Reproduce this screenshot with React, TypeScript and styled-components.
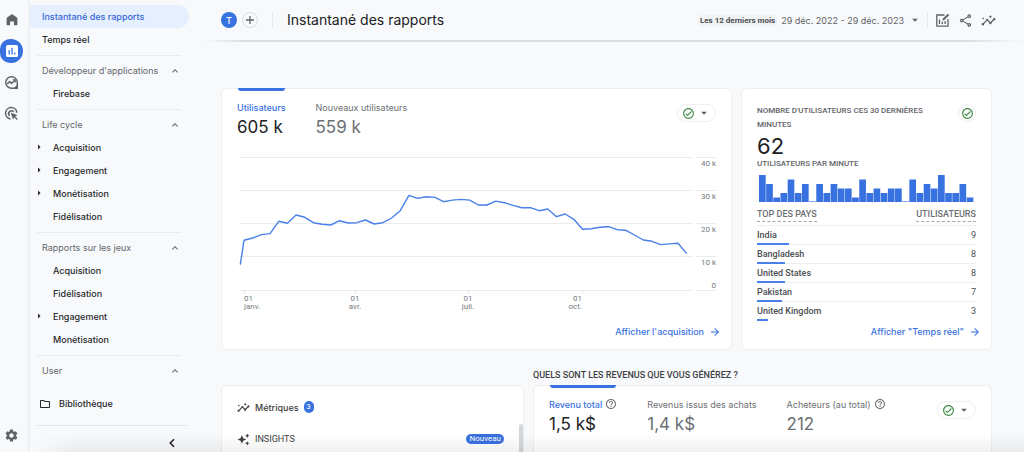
import React from "react";
import styled, { createGlobalStyle } from "styled-components";
import {
  MdArrowDropDown,
  MdArrowForward,
  MdArrowRight,
  MdAutoAwesome,
  MdExpandLess,
  MdHelpOutline,
  MdInsights,
  MdOutlineCheckCircle,
  MdOutlineFolder,
  MdOutlineShare,
  MdSettings,
} from "react-icons/md";

const brand = '"Inter", "Liberation Sans", sans-serif';
const plain = '"Roboto", "Liberation Sans", sans-serif';

const GlobalStyle = createGlobalStyle`
  *, *::before, *::after { box-sizing: border-box; }
  body {
    margin: 0;
    background: #f8f9fb;
    color: #3c4043;
    font-family: ${brand};
    font-size: 9px;
  }
  h1, h2, p, ul { margin: 0; padding: 0; }
  button { font: inherit; color: inherit; background: none; border: 0; padding: 0; cursor: pointer; }
  a { color: inherit; text-decoration: none; }
  svg { display: block; flex: none; }
`;

/* ---------- shell ---------- */

const Shell = styled.div`
  position: relative;
  display: flex;
  height: 100vh;
  overflow: hidden;
`;

const Rail = styled.nav`
  flex: none;
  width: 30px;
  border-right: 2px solid #eff1f3;
  display: flex;
  flex-direction: column;
  gap: 7px;
  padding: 8px 0 5px;
  color: #5f6368;
`;

const RailButton = styled.button<{ $active?: boolean; $last?: boolean }>`
  display: grid;
  place-items: center;
  width: 23px;
  height: 24px;
  border-radius: ${(p) => (p.$active ? "10px 12px 12px 10px" : "0")};
  margin-top: ${(p) => (p.$last ? "auto" : "0")};
  background: ${(p) => (p.$active ? "#3871e0" : "none")};
  color: ${(p) => (p.$active ? "#ffffff" : "inherit")};
`;

const Sidebar = styled.nav`
  flex: none;
  width: 175px;
  padding-top: 5px;
`;

const NavLink = styled.a<{ $active?: boolean; $child?: boolean }>`
  position: relative;
  display: flex;
  align-items: center;
  height: 23px;
  width: 159px;
  padding-left: ${(p) => (p.$child ? "23px" : "12px")};
  border-radius: 0 12px 12px 0;
  background: ${(p) => (p.$active ? "#e6effd" : "none")};
  color: ${(p) => (p.$active ? "#3367d6" : "#27292c")};
  font-weight: 500;
`;

const Caret = styled(MdArrowRight)`
  position: absolute;
  left: 3px;
  top: 5px;
`;

const Group = styled.section`
  width: 144px;
  margin-left: 7px;
  border-top: 1px solid #e9ebee;
  padding: 3px 0 4px;
  & ${NavLink} { margin-left: -7px; }
`;

const TopLinks = styled.div`
  padding-bottom: 4px;
`;

const GroupToggle = styled.button`
  display: flex;
  justify-content: space-between;
  align-items: center;
  width: 100%;
  height: 23px;
  padding-left: 5px;
  color: #63676b;
`;

const Library = styled.a`
  display: flex;
  align-items: center;
  gap: 8px;
  height: 23px;
  margin: 6px 0 10px;
  padding-left: 9px;
  font-weight: 500;
  color: #27292c;
`;

const Collapse = styled.div`
  width: 150px;
  margin-left: 7px;
  border-top: 1px solid #e1e3e6;
  padding: 12px 11px 0 0;
  display: flex;
  justify-content: flex-end;
  color: #202124;
`;

const Main = styled.main`
  flex: 1;
  min-width: 0;
`;

const FadeOut = styled.div`
  position: absolute;
  left: 36px;
  right: 0;
  bottom: 0;
  height: 18px;
  pointer-events: none;
  background: linear-gradient(to bottom, rgba(60, 64, 67, 0), rgba(60, 64, 67, 0.08));
  mask-image: linear-gradient(to right, transparent, #000 40px);
`;

/* ---------- header ---------- */

const Header = styled.header`
  display: flex;
  align-items: center;
  height: 42px;
  padding: 0 28px 0 16px;
  border-bottom: 2px solid;
  border-image: linear-gradient(to right, #f8f9fb, #dadcdf 40px, #dadcdf calc(100% - 60px), #f8f9fb) 1;
`;

const Avatar = styled.span`
  display: grid;
  place-items: center;
  width: 16px;
  height: 16px;
  border-radius: 50%;
  background: #3871e0;
  color: #fff;
  font-weight: 500;
`;

const AddButton = styled.button`
  display: grid;
  place-items: center;
  width: 16px;
  height: 16px;
  margin-left: 5px;
  border: 1px solid #dcdee1;
  border-radius: 50%;
  color: #5f6368;
`;

const Rule = styled.span`
  width: 1px;
  height: 16px;
  margin: 0 14px;
  background: #e6e8ea;
`;

const Title = styled.h1`
  font-size: 14px;
  line-height: 20px;
  font-weight: 400;
  color: #202124;
`;

const DateButton = styled.button`
  display: flex;
  align-items: center;
  margin-left: auto;
  color: #5f6368;
  font-size: 9px;
`;

const Period = styled.span`
  margin-right: 4px;
  padding: 0 2px;
  border-radius: 2px;
  background: #f1f2f4;
  color: #4a4e52;
  font-family: ${plain};
  font-size: 8px;
  line-height: 11px;
  font-weight: 700;
`;

const DateArrow = styled(MdArrowDropDown)`
  margin-left: 4px;
`;

const Tools = styled.div`
  display: flex;
  gap: 8px;
  color: #5f6368;
  & button { display: grid; }
`;

const ToolRule = styled(Rule)`
  margin: 0 7px 0 5px;
`;

/* ---------- cards ---------- */

const Content = styled.div`
  padding: 46px 32px 0 16px;
`;

const TopRow = styled.div`
  display: grid;
  grid-template-columns: minmax(0, 511fr) minmax(0, 251fr);
  gap: 9px;
`;

const BottomRow = styled.div`
  display: grid;
  grid-template-columns: minmax(0, 303fr) minmax(0, 459fr);
  gap: 9px;
  align-items: end;
  margin-top: 19px;
`;

const Card = styled.section`
  position: relative;
  border: 1px solid #eceef0;
  border-radius: 6px;
  background: #fff;
  padding: 13px 15px;
`;

const ShortCard = styled(Card)`
  height: 130px;
`;

const InsightCard = styled(ShortCard)`
  padding-top: 15px;
`;

const TrendCard = styled(Card)`
  min-height: 262px;
`;

const Metrics = styled.div`
  display: flex;
  align-items: flex-start;
`;

const Metric = styled.button<{ $active?: boolean }>`
  position: relative;
  text-align: left;
  margin-right: 30px;
  white-space: nowrap;
  color: #6b6f73;
  &::before {
    content: "";
    display: ${(p) => (p.$active ? "block" : "none")};
    position: absolute;
    top: -14px;
    left: 1px;
    right: 1px;
    height: 3px;
    border-radius: 0 0 3px 3px;
    background: #3871e0;
  }
`;

const MetricLabel = styled.span<{ $active?: boolean }>`
  display: flex;
  align-items: center;
  gap: 3px;
  height: 10px;
  color: ${(p) => (p.$active ? "#3871e0" : "#6b6f73")};
  font-weight: ${(p) => (p.$active ? 500 : 400)};
  & svg { color: #6b6f73; }
`;

const MetricValue = styled.span<{ $active?: boolean }>`
  display: block;
  margin-top: 4px;
  font-size: 17px;
  line-height: 22px;
  color: ${(p) => (p.$active ? "#202124" : "#6b6f73")};
`;

const Status = styled.button<{ $round?: boolean }>`
  display: flex;
  align-items: center;
  justify-content: center;
  gap: 2px;
  flex: none;
  width: ${(p) => (p.$round ? "18px" : "39px")};
  height: 18px;
  margin-top: 2px;
  margin-left: auto;
  border: 1px solid #eceef0;
  border-radius: 9px;
  color: #5f6368;
  & svg:first-child { color: #3d8a45; }
`;

const Chart = styled.svg`
  width: 100%;
  margin-top: 12px;
  overflow: visible;
  & text {
    font-family: ${plain};
    font-size: 8px;
    fill: #75797d;
  }
`;

const MoreLink = styled.a`
  position: absolute;
  right: 10px;
  bottom: 11px;
  display: flex;
  align-items: center;
  gap: 5px;
  color: #3871e0;
  font-weight: 500;
  line-height: 12px;
`;

const CardHead = styled.div`
  display: flex;
  align-items: flex-start;
  justify-content: space-between;
`;

const Overline = styled.h2`
  font-family: ${plain};
  font-size: 8px;
  line-height: 14px;
  font-weight: 500;
  color: #5f6368;
  text-transform: uppercase;
`;

const HeadText = styled(Overline)`
  padding-top: 2px;
`;

const BigNumber = styled.p`
  font-size: 22px;
  line-height: 26px;
  margin: 1px 0 -2px;
  color: #202124;
`;

const Bars = styled.svg`
  width: 100%;
  margin-top: 4px;
  padding: 0 2px;
`;

/* Share of the table's width that the country column takes. */
const countryColumn = 0.7;

const Countries = styled.table`
  width: 100%;
  margin-top: 6px;
  table-layout: fixed;
  border-collapse: collapse;
  font-family: ${plain};
  color: #4a4e52;
  & th { padding: 0; font-weight: 500; text-align: left; }
  & td { padding: 0; text-align: right; }
  & thead th { height: 17px; vertical-align: top; font-size: 9px; color: #6b6f73; }
  & thead th:first-child { width: ${countryColumn * 100}%; }
  & thead th:last-child { text-align: right; }
  & tbody tr { border-top: 1px solid #eceef0; height: 19px; }
`;

const Dashed = styled.span`
  display: inline-block;
  line-height: 13px;
  border-bottom: 1px dashed #a5a8ab;
`;

const Country = styled.div`
  position: relative;
  line-height: 18px;
`;

const Share = styled.div`
  position: absolute;
  left: 0;
  bottom: -1px;
  height: 2px;
  background: #4a80e8;
`;

const SectionTitle = styled(Overline)`
  color: #3c4043;
  font-size: 9px;
  line-height: 12px;
  margin-bottom: 4px;
`;

const InsightHead = styled.div`
  display: flex;
  align-items: center;
  gap: 5px;
  height: 12px;
  font-weight: 500;
  color: #3c4043;
`;

const InsightRow = styled(InsightHead)`
  margin: 20px 4px 0 0;
  font-family: ${plain};
  font-weight: 400;
`;

const Count = styled.span`
  min-width: 10px;
  padding: 0 2px;
  border-radius: 6px;
  background: #3871e0;
  color: #fff;
  font-family: ${plain};
  font-size: 8px;
  font-weight: 400;
  line-height: 12px;
  text-align: center;
`;

const NewTag = styled(Count)`
  margin-left: auto;
  padding: 0 3px;
  line-height: 10px;
`;

const Thumb = styled.div`
  position: absolute;
  right: 0;
  top: 38px;
  bottom: 0;
  width: 4px;
  border-radius: 2px 2px 0 0;
  background: #d5d7da;
`;

/* ---------- icons ---------- */

const HomeIcon = () => (
  <svg width="14" height="14" viewBox="0 0 14 14" fill="currentColor">
    <path d="M6.4 1.4q.6-.4 1.2 0l4.3 3.1q.5.4.5 1v6.1q0 .7-.7.7H8.9V8.4H5.1v3.9H2.3q-.7 0-.7-.7V5.500q0-.6.5-1z" />
  </svg>
);

const ReportsIcon = () => (
  <svg width="14" height="14" viewBox="0 0 14 14">
    <rect x="1" y="1" width="12" height="12" rx="1.5" fill="#fff" />
    <path d="M4.2 6v4.4M7 3.8v6.6M9.8 8.6v1.8" stroke="#3871e0" strokeWidth="1.3" />
  </svg>
);

const ExploreIcon = () => (
  <svg width="15" height="15" viewBox="0 0 15 15" fill="none" stroke="currentColor" strokeWidth="1.4">
    <path d="M13.3 13.3H7.5a5.8 5.8 0 1 1 5.8-5.8z" />
    <path d="m3.2 9 2.4-2.5 2 2 3.3-3.3" />
    <path d="M8.7 4.9h2.5v2.5" strokeWidth="1.2" />
    <path d="m10 13.3 3.3-3.3v3.3z" fill="currentColor" strokeWidth="0.6" />
  </svg>
);

const AdsIcon = () => (
  <svg width="15" height="15" viewBox="0 0 15 15" fill="none" stroke="currentColor" strokeWidth="1.5">
    <path d="M6.600 12.900A5.700 5.700 0 1 1 12.900 6.600" />
    <path d="M5.600 9.900A3 3 0 1 1 9.900 5.600" />
    <path d="m6.700 6.700 7 2.500-2.500 1.100 2.600 2.600-1 1-2.600-2.600-1.100 2.400z" fill="currentColor" stroke="none" />
  </svg>
);

const EditReportIcon = () => (
  <svg width="15" height="15" viewBox="0 0 15 15" fill="none" stroke="currentColor" strokeWidth="1.3">
    <path d="M9.500 2H1.800v11.200H13V6" />
    <path d="M4.500 6.500V11M7.300 8.800V11M10.100 8v3" />
    <path d="m7.800 7.200.4-1.600 4.700-4.500 1 1.100-4.600 4.600z" fill="currentColor" strokeWidth="0.6" />
  </svg>
);

const PlusIcon = () => (
  <svg width="10" height="10" viewBox="0 0 10 10" stroke="currentColor" strokeWidth="1.3">
    <path d="M5 1v8M1 5h8" />
  </svg>
);

const CollapseIcon = () => (
  <svg width="8" height="10" viewBox="0 0 8 10" fill="none" stroke="currentColor" strokeWidth="1.6">
    <path d="M6 1.300 2.300 5 6 8.700" />
  </svg>
);

/* ---------- data ---------- */

interface NavGroup {
  title: string;
  items: { label: string; expandable?: boolean }[];
}

const groups: NavGroup[] = [
  { title: "Développeur d'applications", items: [{ label: "Firebase" }] },
  {
    title: "Life cycle",
    items: [
      { label: "Acquisition", expandable: true },
      { label: "Engagement", expandable: true },
      { label: "Monétisation", expandable: true },
      { label: "Fidélisation" },
    ],
  },
  {
    title: "Rapports sur les jeux",
    items: [
      { label: "Acquisition" },
      { label: "Fidélisation" },
      { label: "Engagement", expandable: true },
      { label: "Monétisation" },
    ],
  },
  { title: "User", items: [] },
];

/* Weekly users over the year, in thousands; the first entry is a partial week. */
const weekly = [
  7.8, 15.1, 15.8, 16.8, 17.1, 20.8, 20.2, 22.7, 22, 20.4, 19.9, 19.7, 21, 20.3, 20.4, 21.2, 20, 20.4,
  21.8, 24, 28.6, 27.7, 28.2, 28, 26.7, 27.2, 27.4, 27.2, 25.7, 25.7, 26.9, 26.4, 25.6, 24.9, 24.9, 24,
  24.5, 22.2, 23, 21.4, 18.4, 18.6, 19, 19.2, 18.3, 18.1, 16.7, 15.2, 14.8, 13.8, 14, 14.2, 11.1,
];

const perMinute = [
  6, 4, 1, 2, 5, 2, 4, 0, 4, 2, 4, 3, 3, 1, 5, 2, 3, 2, 3, 3, 0, 5, 2, 4, 3, 6, 2, 2, 4, 1,
];

const countries = [
  { name: "India", users: 9 },
  { name: "Bangladesh", users: 8 },
  { name: "United States", users: 8 },
  { name: "Pakistan", users: 7 },
  { name: "United Kingdom", users: 3 },
];
const totalUsers = 62;

const yFor = (thousands: number) => 140.5 - thousands * 3.325;
const linePoints = weekly
  .map((v, i) => `${i === 0 ? 3.3 : 7 + (i - 1) * 8.68},${yFor(v).toFixed(1)}`)
  .join(" ");

const ticks = [
  { x: 7, month: "janv.", anchor: "start" as const },
  { x: 118, month: "avr.", anchor: "middle" as const },
  { x: 231, month: "juil.", anchor: "middle" as const },
  { x: 345, month: "oct.", anchor: "end" as const },
];

function TrendChart() {
  return (
    <Chart viewBox="0 0 479 164" role="img" aria-label="Utilisateurs">
      {[40, 30, 20, 10, 0].map((v) => (
        <g key={v}>
          <path
            d={`M3 ${Math.round(yFor(v)) - 0.5}H456M459 ${Math.round(yFor(v)) - 0.5}H479`}
            stroke="#eaecee"
          />
          <text x="479" y={v === 0 ? 138 : yFor(v) + 8} textAnchor="end">
            {v === 0 ? "0" : `${v} k`}
          </text>
        </g>
      ))}
      {ticks.map((t) => (
        <g key={t.month}>
          <path d={`M${t.x + 0.5} 140v4`} stroke="#e3e5e8" />
          <text x={t.x} y="151" textAnchor={t.anchor}>01</text>
          <text x={t.x} y="159" textAnchor={t.anchor}>{t.month}</text>
        </g>
      ))}
      <polyline points={linePoints} fill="none" stroke="#4a80e8" strokeWidth="1.4" strokeLinejoin="round" />
    </Chart>
  );
}

function StatusPill() {
  return (
    <Status aria-label="Qualité des données">
      <MdOutlineCheckCircle size={13} />
      <MdArrowDropDown size={14} />
    </Status>
  );
}

export default function App() {
  return (
    <>
      <GlobalStyle />
      <Shell>
        <Rail aria-label="Navigation principale">
          <RailButton aria-label="Accueil"><HomeIcon /></RailButton>
          <RailButton aria-label="Rapports" $active><ReportsIcon /></RailButton>
          <RailButton aria-label="Explorer"><ExploreIcon /></RailButton>
          <RailButton aria-label="Publicité"><AdsIcon /></RailButton>
          <RailButton aria-label="Administration" $last><MdSettings size={15} /></RailButton>
        </Rail>

        <Sidebar aria-label="Rapports">
          <TopLinks>
            <NavLink href="#instantane" $active>Instantané des rapports</NavLink>
            <NavLink href="#temps-reel">Temps réel</NavLink>
          </TopLinks>
          {groups.map((g) => (
            <Group key={g.title}>
              <GroupToggle aria-expanded>
                {g.title}
                <MdExpandLess size={12} />
              </GroupToggle>
              {g.items.map((item) => (
                <NavLink key={item.label} href="#rapport" $child>
                  {item.expandable && <Caret size={12} />}
                  {item.label}
                </NavLink>
              ))}
            </Group>
          ))}
          <Library href="#bibliotheque">
            <MdOutlineFolder size={12} />
            Bibliothèque
          </Library>
          <Collapse>
            <button aria-label="Réduire"><CollapseIcon /></button>
          </Collapse>
        </Sidebar>

        <Main>
          <Header>
            <Avatar>T</Avatar>
            <AddButton aria-label="Ajouter une comparaison"><PlusIcon /></AddButton>
            <Rule />
            <Title>Instantané des rapports</Title>
            <DateButton>
              <Period>Les 12 derniers mois</Period>
              29 déc. 2022 - 29 déc. 2023
              <DateArrow size={14} />
            </DateButton>
            <ToolRule />
            <Tools>
              <button aria-label="Personnaliser le rapport"><EditReportIcon /></button>
              <button aria-label="Partager"><MdOutlineShare size={15} /></button>
              <button aria-label="Insights"><MdInsights size={15} /></button>
            </Tools>
          </Header>

          <Content>
            <TopRow>
              <TrendCard>
                <Metrics>
                  <Metric $active>
                    <MetricLabel $active>Utilisateurs</MetricLabel>
                    <MetricValue $active>605 k</MetricValue>
                  </Metric>
                  <Metric>
                    <MetricLabel>Nouveaux utilisateurs</MetricLabel>
                    <MetricValue>559 k</MetricValue>
                  </Metric>
                  <StatusPill />
                </Metrics>
                <TrendChart />
                <MoreLink href="#acquisition">
                  Afficher l'acquisition
                  <MdArrowForward size={12} />
                </MoreLink>
              </TrendCard>

              <Card>
                <CardHead>
                  <HeadText>Nombre d'utilisateurs ces 30 dernières minutes</HeadText>
                  <Status $round aria-label="Qualité des données">
                    <MdOutlineCheckCircle size={13} />
                  </Status>
                </CardHead>
                <BigNumber>62</BigNumber>
                <Overline>Utilisateurs par minute</Overline>
                <Bars viewBox="0 0 215 27" role="img" aria-label="Utilisateurs par minute">
                  {perMinute.map((v, i) => (
                    <rect
                      key={i}
                      x={i * 7.16}
                      y={27 - Math.max(v * 4.5, 0.6)}
                      width="6.7"
                      height={Math.max(v * 4.5, 0.6)}
                      fill="#3871e0"
                    />
                  ))}
                </Bars>
                <Countries>
                  <thead>
                    <tr>
                      <th scope="col"><Dashed>TOP DES PAYS</Dashed></th>
                      <th scope="col"><Dashed>UTILISATEURS</Dashed></th>
                    </tr>
                  </thead>
                  <tbody>
                    {countries.map((c) => (
                      <tr key={c.name}>
                        <th scope="row">
                          <Country>
                            {c.name}
                            <Share style={{ width: `${(c.users / totalUsers / countryColumn) * 100}%` }} />
                          </Country>
                        </th>
                        <td>{c.users}</td>
                      </tr>
                    ))}
                  </tbody>
                </Countries>
                <MoreLink href="#temps-reel">
                  Afficher "Temps réel"
                  <MdArrowForward size={12} />
                </MoreLink>
              </Card>
            </TopRow>

            <BottomRow>
              <InsightCard>
                <InsightHead>
                  <MdInsights size={13} />
                  Métriques
                  <Count>3</Count>
                </InsightHead>
                <InsightRow>
                  <MdAutoAwesome size={13} />
                  INSIGHTS
                  <NewTag>Nouveau</NewTag>
                </InsightRow>
                <Thumb />
              </InsightCard>
              <div>
                <SectionTitle>Quels sont les revenus que vous générez ?</SectionTitle>
                <ShortCard>
                  <Metrics>
                    <Metric $active>
                      <MetricLabel $active>Revenu total <MdHelpOutline size={12} /></MetricLabel>
                      <MetricValue $active>1,5 k$</MetricValue>
                    </Metric>
                    <Metric>
                      <MetricLabel>Revenus issus des achats</MetricLabel>
                      <MetricValue>1,4 k$</MetricValue>
                    </Metric>
                    <Metric>
                      <MetricLabel>Acheteurs (au total) <MdHelpOutline size={12} /></MetricLabel>
                      <MetricValue>212</MetricValue>
                    </Metric>
                    <StatusPill />
                  </Metrics>
                </ShortCard>
              </div>
            </BottomRow>
          </Content>
        </Main>
        <FadeOut />
      </Shell>
    </>
  );
}
